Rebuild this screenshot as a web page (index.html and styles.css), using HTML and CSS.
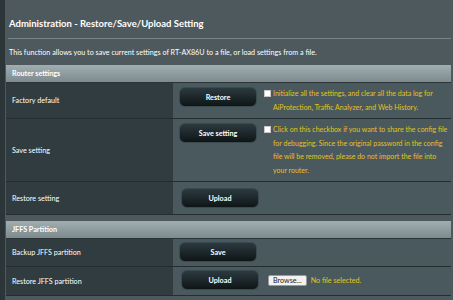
FILE: index.html
```html
<!DOCTYPE html>
<html lang="en">
<head>
    <meta charset="UTF-8">
    <title>Administration - Restore/Save/Upload Setting</title>
    <link rel="stylesheet" href="styles.css">
</head>
<body>
<div class="page">
    <!-- Page heading -->
    <div class="title">Administration - Restore/Save/Upload Setting</div>
    <div class="divider"></div>
    <p class="desc">This function allows you to save current settings of RT-AX86U to a file, or load settings from a file.</p>

    <!-- Router settings -->
    <table class="form-table">
        <thead>
        <tr><td colspan="2">Router settings</td></tr>
        </thead>
        <tbody>
        <tr>
            <th>Factory default</th>
            <td>
                <div class="cell">
                    <button class="btn">Restore</button>
                    <label class="hint"><span class="check"></span><span>Initialize all the settings, and clear all the data log for AiProtection, Traffic Analyzer, and Web History.</span></label>
                </div>
            </td>
        </tr>
        <tr>
            <th>Save setting</th>
            <td>
                <div class="cell">
                    <button class="btn">Save setting</button>
                    <label class="hint"><span class="check"></span><span>Click on this checkbox if you want to share the config file for debugging. Since the original password in the config file will be removed, please do not import the file into your router.</span></label>
                </div>
            </td>
        </tr>
        <tr>
            <th>Restore setting</th>
            <td>
                <div class="cell cell-wide">
                    <button class="btn">Upload</button>
                </div>
            </td>
        </tr>
        </tbody>
    </table>

    <!-- JFFS partition -->
    <table class="form-table">
        <thead>
        <tr><td colspan="2">JFFS Partition</td></tr>
        </thead>
        <tbody>
        <tr>
            <th>Backup JFFS partition</th>
            <td>
                <div class="cell cell-slim">
                    <button class="btn">Save</button>
                </div>
            </td>
        </tr>
        <tr>
            <th>Restore JFFS partition</th>
            <td>
                <div class="cell cell-file">
                    <button class="btn">Upload</button>
                    <span class="browse">Browse...</span>
                    <span class="file-name">No file selected.</span>
                </div>
            </td>
        </tr>
        </tbody>
    </table>
</div>
</body>
</html>
```

FILE: styles.css
```css
* {
    padding: 0;
    margin: 0;
    box-sizing: border-box;
}

body {
    background-color: #4d595d;
    font-family: "Lato", "Liberation Sans", sans-serif;
    font-size: 7.2px;
    color: #ffffff;
}

.page {
    border-left: 5px solid #2c3538;
    min-height: 300px;
    padding: 18px 2px 0 1px;
}

.title {
    font-size: 9.5px;
    font-weight: bold;
    padding-left: 3px;
    line-height: 12px;
}

.divider {
    height: 1px;
    background-color: #76848a;
    margin: 8px 0 0 2px;
}

.desc {
    padding: 8px 0 0 3px;
    line-height: 12px;
    height: 26px;
}

.form-table {
    width: 100%;
    border-collapse: separate;
    border-spacing: 0;
    margin-bottom: 6px;
}

.form-table thead td {
    background: linear-gradient(to bottom, #a0adb1, #7d8a8e);
    font-weight: bold;
    height: 18px;
    padding-left: 6px;
    border-bottom: 1px solid #2a3336;
}

.form-table th {
    width: 167px;
    background-color: #313c40;
    text-align: left;
    font-weight: normal;
    padding-left: 6px;
    border-bottom: 1px solid #252d30;
}

.form-table td {
    background-color: #4a595e;
    border-bottom: 1px solid #252d30;
}

.cell {
    display: flex;
    align-items: flex-start;
    padding: 4px 0 4px 6px;
}

.cell-wide {
    padding: 6px 0 6px 8px;
}

.cell-slim {
    padding: 3px 0 4px 6px;
}

.cell-file {
    padding: 3px 0 5px 8px;
}

.btn {
    flex: none;
    width: 78px;
    height: 20px;
    border: 1px solid #3b4a4f;
    border-radius: 6px;
    background: linear-gradient(to bottom, #2b3a3f, #0f1517);
    color: #ffffff;
    font-family: inherit;
    font-size: 7.2px;
    font-weight: bold;
}

.hint {
    display: flex;
    gap: 2px;
    padding-left: 7px;
    color: #e6c21d;
    font-size: 7px;
    line-height: 13.5px;
}

.check {
    flex: none;
    width: 7px;
    height: 7px;
    margin-top: 3px;
    background-color: #ffffff;
    border: 1px solid #c8c8c8;
}

.browse {
    align-self: center;
    margin-left: 9px;
    padding: 0 4px;
    height: 11px;
    line-height: 10px;
    background-color: #f2f2f2;
    border: 1px solid #9a9a9a;
    border-radius: 2px;
    color: #222222;
    font-size: 7.2px;
}

.file-name {
    align-self: center;
    margin-left: 4px;
    color: #e6c21d;
}
```
